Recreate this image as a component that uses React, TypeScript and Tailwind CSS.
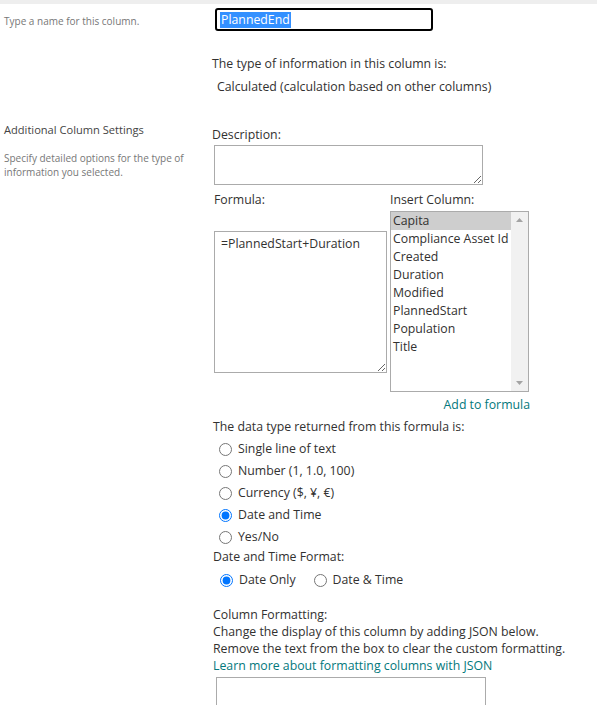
import React from 'react';

const columns = [
  'Capita',
  'Compliance Asset Id',
  'Created',
  'Duration',
  'Modified',
  'PlannedStart',
  'Population',
  'Title',
];

const dataTypes = [
  { label: 'Single line of text', checked: false },
  { label: 'Number (1, 1.0, 100)', checked: false },
  { label: 'Currency ($, ¥, €)', checked: false },
  { label: 'Date and Time', checked: true },
  { label: 'Yes/No', checked: false },
];

const Radio: React.FC<{ checked: boolean; name: string }> = ({ checked, name }) => (
  <input
    type="radio"
    name={name}
    defaultChecked={checked}
    className="m-0 h-[13px] w-[13px] shrink-0"
  />
);

export default function App() {
  return (
    <div className="min-h-screen bg-white font-['Segoe_UI','Open_Sans',sans-serif] text-[12.3px] text-[#323130]">
      <div className="h-[4px] bg-[#eeeeee]" />

      {/* Name */}
      <div className="flex">
        <div className="w-[212px] shrink-0 pl-[4px] pt-[7px] text-[10px] leading-[20px] text-[#777]">
          Type a name for this column.
        </div>
        <div className="pt-[4px]">
          <div className="ml-[3px] flex h-[23px] w-[218px] items-center rounded-[3px] border-2 border-black px-[3px]">
            <span className="bg-[#3390ff] px-[1px] leading-[16px] text-white">PlannedEnd</span>
          </div>
          <div className="mt-[23px] leading-[20px]">The type of information in this column is:</div>
          <div className="mt-[3px] pl-[5px] leading-[20px]">Calculated (calculation based on other columns)</div>
        </div>
      </div>

      {/* Additional settings */}
      <div className="flex">
        <div className="w-[212px] shrink-0 pl-[4px] pt-[24px]">
          <div className="text-[11.1px] leading-[18px] text-[#444]">Additional Column Settings</div>
          <div className="mt-[12px] w-[186px] text-[10px] leading-[14px] text-[#777]">
            Specify detailed options for the type of information you selected.
          </div>
        </div>

        <div className="pt-[29px]">
          <div className="leading-[18px]">Description:</div>
          <textarea className="mt-[1px] ml-[2px] block h-[40px] w-[269px] border border-[#ababab] outline-none" />

          <div className="mt-[6px] flex pl-[2px]">
            <div className="w-[176px]">
              <div className="leading-[18px]">Formula:</div>
              <textarea
                defaultValue="=PlannedStart+Duration"
                className="mt-[22px] block h-[142px] w-[173px] border border-[#ababab] px-[6px] pt-[3px] leading-[18px] outline-none"
              />
            </div>
            <div className="w-[140px]">
              <div className="leading-[18px]">Insert Column:</div>
              <div className="mt-[2px] flex h-[181px] w-[139px] border border-[#ababab]">
                <div className="flex-1 overflow-hidden">
                  {columns.map((c, i) => (
                    <div
                      key={c}
                      className={`whitespace-nowrap pl-[2px] leading-[18px] ${i === 0 ? 'bg-[#cecece]' : ''}`}
                    >
                      {c}
                    </div>
                  ))}
                </div>
                <div className="flex w-[17px] flex-col items-center justify-between bg-[#f1f1f1] py-[6px]">
                  <svg width="7" height="4" viewBox="0 0 7 4">
                    <path d="M0 4 L3.5 0 L7 4 Z" fill="#a3a3a3" />
                  </svg>
                  <svg width="7" height="4" viewBox="0 0 7 4">
                    <path d="M0 0 L3.5 4 L7 0 Z" fill="#a3a3a3" />
                  </svg>
                </div>
              </div>
              <div className="mt-[4px] w-[140px] text-right leading-[18px] text-[#03787c]">Add to formula</div>
            </div>
          </div>

          <div className="mt-[4px] pl-[1px] leading-[18px]">The data type returned from this formula is:</div>
          <div className="mt-[2px] pl-[7px]">
            {dataTypes.map((d) => (
              <label key={d.label} className="flex h-[22px] items-center gap-[6px]">
                <Radio name="dataType" checked={d.checked} />
                <span>{d.label}</span>
              </label>
            ))}
          </div>

          <div className="pl-[1px] leading-[18px]">Date and Time Format:</div>
          <div className="mt-[3px] flex h-[22px] items-center pl-[8px]">
            <label className="flex items-center gap-[6px]">
              <Radio name="dtFormat" checked />
              <span>Date Only</span>
            </label>
            <label className="ml-[18px] flex items-center gap-[6px]">
              <Radio name="dtFormat" checked={false} />
              <span>Date &amp; Time</span>
            </label>
          </div>

          <div className="mt-[15px] pl-[1px] leading-[17px]">
            <div>Column Formatting:</div>
            <div>Change the display of this column by adding JSON below.</div>
            <div>Remove the text from the box to clear the custom formatting.</div>
            <div className="text-[#03787c]">Learn more about formatting columns with JSON</div>
          </div>
          <textarea className="mt-[3px] ml-[4px] block h-[40px] w-[270px] border border-[#ababab] outline-none" />
        </div>
      </div>
    </div>
  );
}
